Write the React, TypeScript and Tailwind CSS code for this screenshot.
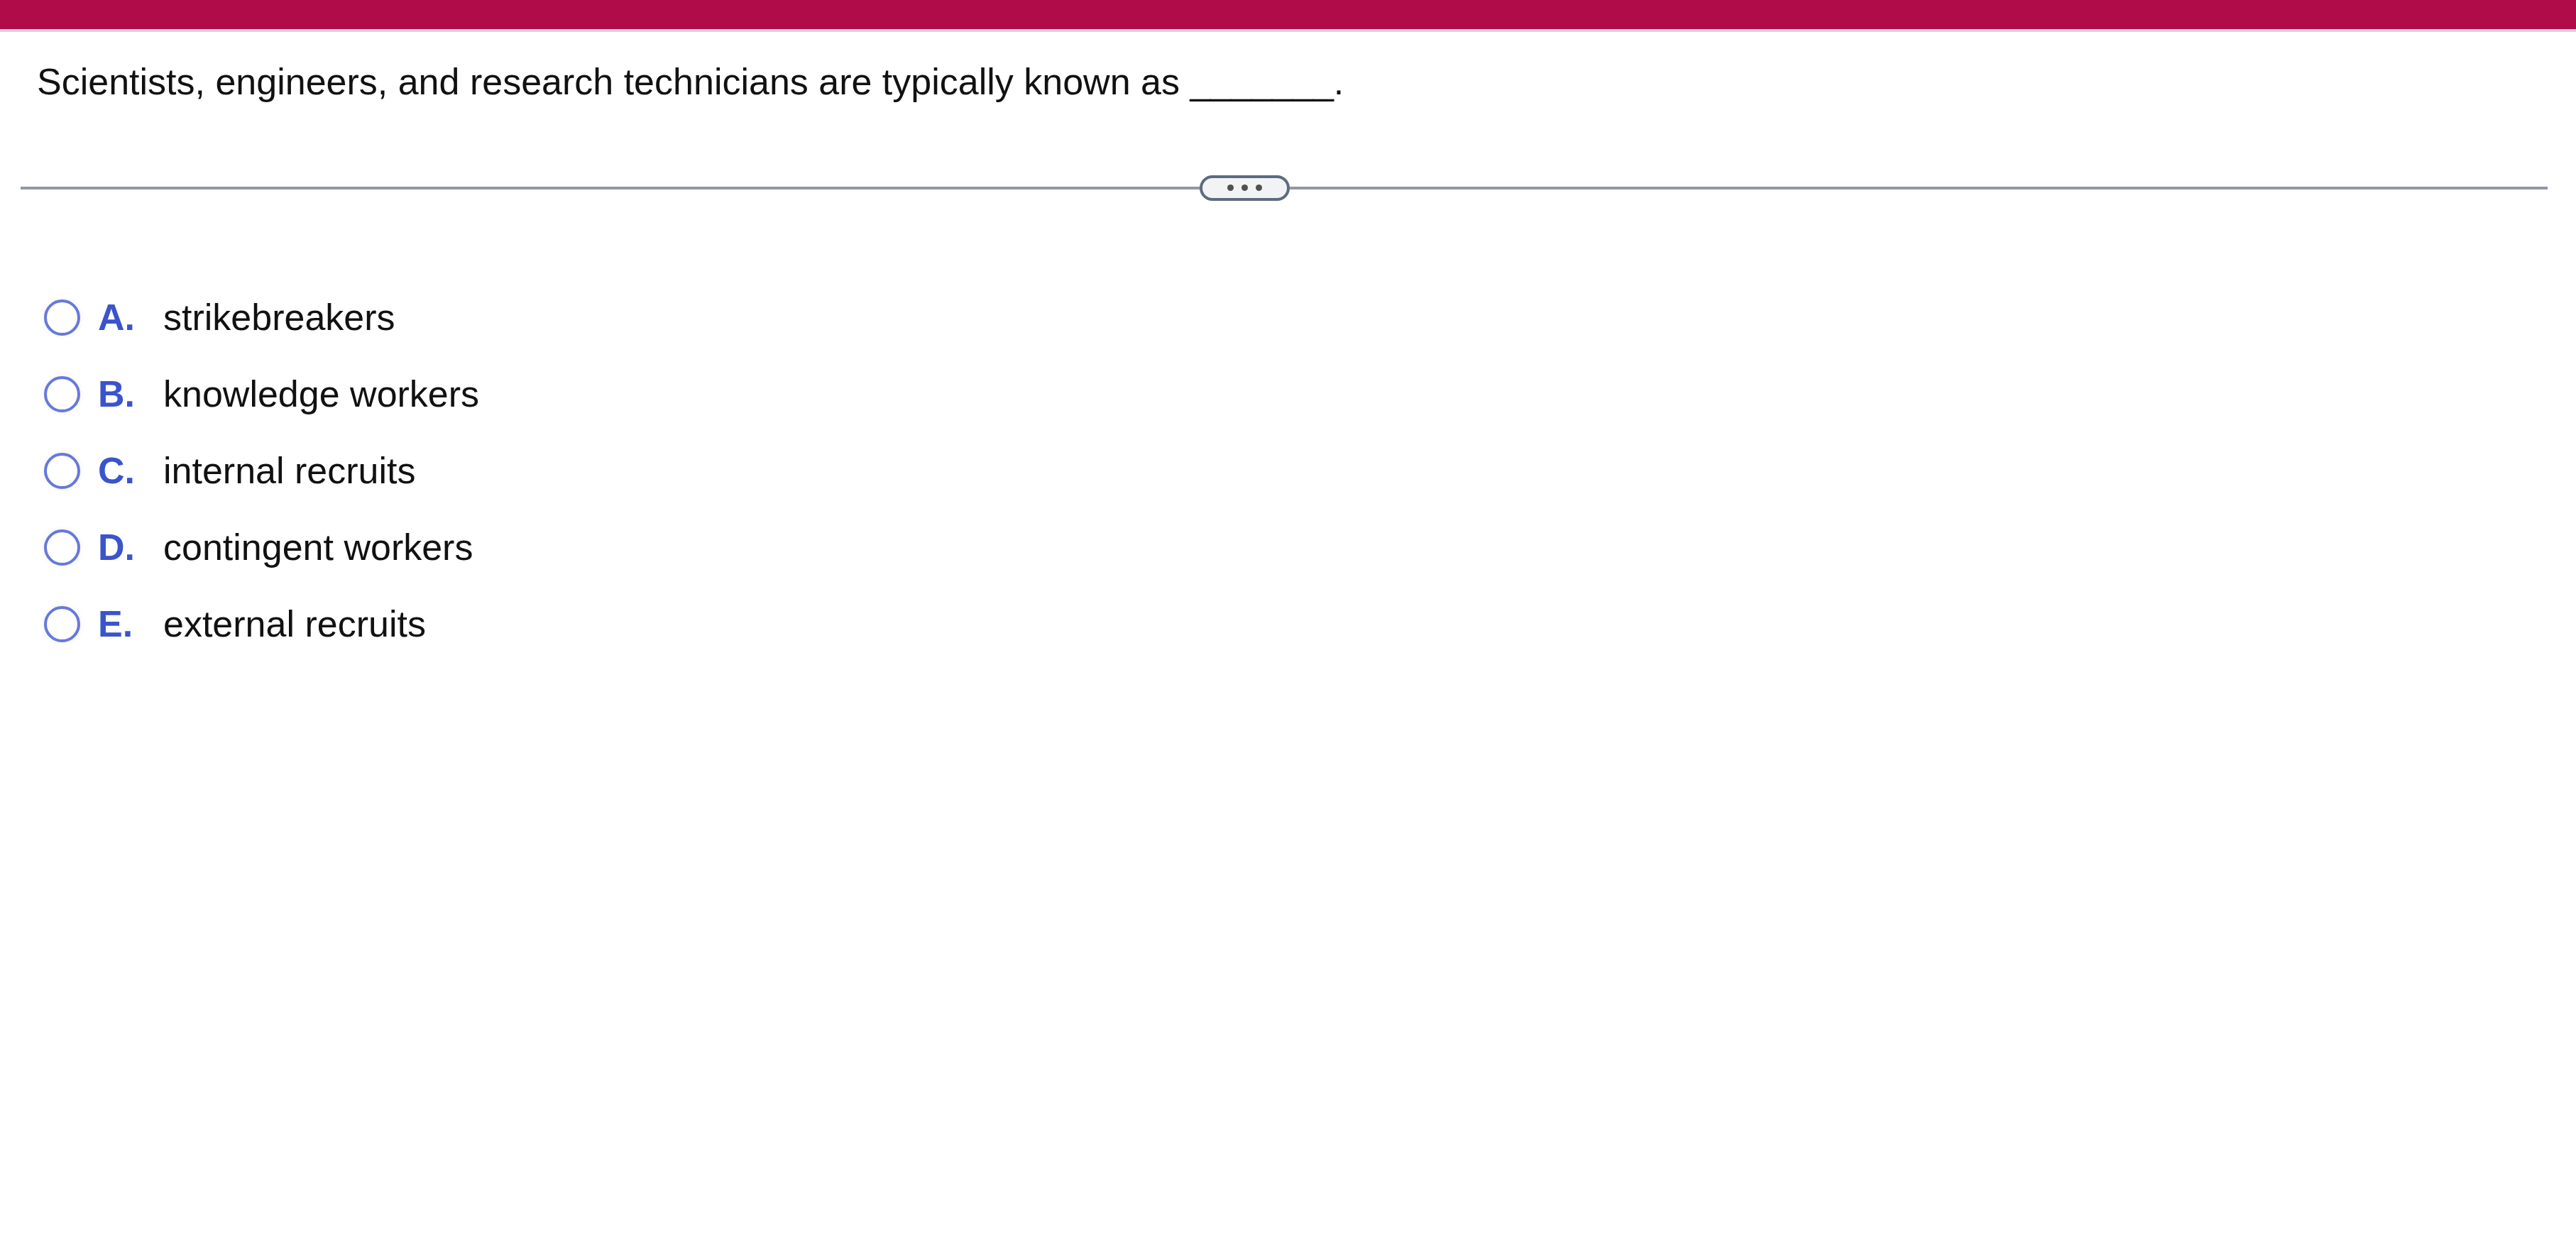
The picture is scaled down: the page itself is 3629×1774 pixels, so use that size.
import React from "react";

type Choice = {
    letter: string;
    text: string;
};

const choices: Choice[] = [
    { letter: "A.", text: "strikebreakers" },
    { letter: "B.", text: "knowledge workers" },
    { letter: "C.", text: "internal recruits" },
    { letter: "D.", text: "contingent workers" },
    { letter: "E.", text: "external recruits" },
];

function ChoiceRow({ letter, text }: Choice) {
    return (
        <label className="flex h-[108px] cursor-pointer items-center">
            <span className="ml-[62px] inline-block h-[51px] w-[51px] shrink-0 rounded-full border-[4px] border-[#6679da] bg-white shadow-[0_0_5px_3px_rgba(0,0,0,0.03)]" />
            <span className="ml-[25px] w-[92px] shrink-0 font-bold text-[#3a54cc]">
                {letter}
            </span>
            <span className="text-[#111]">{text}</span>
        </label>
    );
}

export default function App() {
    return (
        <div
            className="min-h-screen w-full bg-white text-[52px] leading-[1.15]"
            style={{ fontFamily: '"Liberation Sans", Arial, sans-serif' }}
        >
            {/* header bar */}
            <div className="h-[41px] w-full bg-[#b00c4a]" />
            <div className="h-[4px] w-full bg-[#cfd4e0]" />

            {/* question */}
            <p className="mt-[41px] pl-[52px] text-[#111]">
                Scientists, engineers, and research technicians are typically known as
                _______.
            </p>

            {/* divider with expand pill */}
            <div className="mt-[101px] flex h-[36px] items-center pl-[29px] pr-[40px]">
                <div className="h-[4px] w-[1661px] bg-[#8f97aa]" />
                <button className="flex h-[36px] w-[127px] shrink-0 items-center justify-center gap-[11px] rounded-full border-[4px] border-[#5d6b7e] bg-[#f2f3f5]">
                    <span className="h-[9px] w-[9px] rounded-full bg-[#505050]" />
                    <span className="h-[9px] w-[9px] rounded-full bg-[#505050]" />
                    <span className="h-[9px] w-[9px] rounded-full bg-[#505050]" />
                </button>
                <div className="h-[4px] flex-1 bg-[#8f97aa]" />
            </div>

            {/* choices */}
            <div className="mt-[111px] flex flex-col">
                {choices.map((c) => (
                    <ChoiceRow key={c.letter} letter={c.letter} text={c.text} />
                ))}
            </div>
        </div>
    );
}
